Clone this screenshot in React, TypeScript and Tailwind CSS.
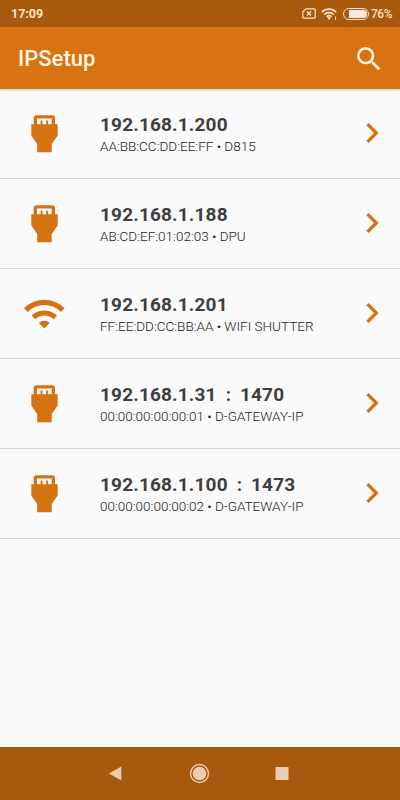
import type { ReactNode } from "react";

type Device = {
  ip: string;
  port?: string;
  mac: string;
  name: string;
  wifi?: boolean;
};

const devices: Device[] = [
  { ip: "192.168.1.200", mac: "AA:BB:CC:DD:EE:FF", name: "D815" },
  { ip: "192.168.1.188", mac: "AB:CD:EF:01:02:03", name: "DPU" },
  {
    ip: "192.168.1.201",
    mac: "FF:EE:DD:CC:BB:AA",
    name: "WIFI SHUTTER",
    wifi: true,
  },
  {
    ip: "192.168.1.31",
    port: "1470",
    mac: "00:00:00:00:00:01",
    name: "D-GATEWAY-IP",
  },
  {
    ip: "192.168.1.100",
    port: "1473",
    mac: "00:00:00:00:00:02",
    name: "D-GATEWAY-IP",
  },
];

export default function App() {
  return (
    <div className="flex h-screen w-full flex-col overflow-hidden bg-[#fafafa] font-[Roboto,sans-serif]">
      <StatusBar />

      <header className="z-10 flex h-[62px] shrink-0 items-center justify-between bg-[#d97211] pt-[2px] pr-[15px] pl-[18px] shadow-[0_1px_3px_rgba(0,0,0,0.2)]">
        <h1 className="text-[22px] leading-7 font-medium text-[#fff6e4]">
          IPSetup
        </h1>
        <SearchIcon />
      </header>

      <main className="flex-1">
        {devices.map((device) => (
          <DeviceRow key={device.ip} device={device} />
        ))}
      </main>

      <NavBar />
    </div>
  );
}

function StatusBar() {
  return (
    <div className="flex h-[27px] shrink-0 items-center justify-between bg-[#a9590e] pr-2 pl-[11px] text-[#fbe3c6]">
      <span className="pt-px text-[12.5px] leading-4 font-bold">17:09</span>
      <div className="flex items-center">
        <svg className="h-[11px] w-[14px]" viewBox="0 0 14 11" fill="none">
          <path
            d="M4 .8h8.2a1 1 0 0 1 1 1v7.4a1 1 0 0 1-1 1H1.8a1 1 0 0 1-1-1V4z"
            stroke="currentColor"
            strokeWidth="1.2"
          />
          <path
            d="m5 3.500 4 4m0-4-4 4"
            stroke="currentColor"
            strokeWidth="1.4"
          />
        </svg>
        <svg className="ml-[5px] h-3 w-4" viewBox="0 0 16 12" fill="none">
          <path
            d="M.8 4.100a10.300 10.300 0 0 1 14.400 0M3.200 6.500a6.900 6.900 0 0 1 9.600 0M5.500 8.800a3.600 3.600 0 0 1 5 0"
            stroke="currentColor"
            strokeWidth="1.700"
          />
          <path
            d="m6.200 9.900 1.800 2 1.800-2a2.600 2.600 0 0 0-3.600 0M14 8.500h1V12h-1z"
            fill="currentColor"
          />
        </svg>
        <div className="ml-1.5 flex h-3 w-[26px] items-center justify-end rounded-full border border-current pr-px">
          <div className="h-2 w-[18px] rounded-r-full bg-[#f8e9df]" />
        </div>
        <span className="ml-[2px] text-[12px] leading-4 font-medium tracking-[-0.5px]">
          76%
        </span>
      </div>
    </div>
  );
}

function DeviceRow({ device }: { device: Device }) {
  return (
    <div className="flex h-[90px] items-center border-b border-[#d9d9d9] pr-2 pb-px">
      <div className="flex w-[100px] justify-start pt-[2px] pl-[23px] text-[#d57212]">
        {device.wifi ? <WifiIcon /> : <EthernetIcon />}
      </div>
      <div className="flex-1 pt-1 whitespace-pre">
        <div className="text-[19px] leading-[22px] font-bold tracking-[0.17px] text-[#3f3f3f]">
          {device.ip}
          {device.port && (
            <>
              <span className="tracking-[-0.2px]">{"  :  "}</span>
              {device.port}
            </>
          )}
        </div>
        <div className="text-[13.5px] leading-5 font-light text-[#222222]">
          {device.mac} • {device.name}
        </div>
      </div>
      <svg
        className="size-10 text-[#d57212]"
        viewBox="0 0 24 24"
        fill="currentColor"
      >
        <path d="M10 6 8.590 7.410 13.170 12l-4.580 4.590L10 18l6-6z" />
      </svg>
    </div>
  );
}

function EthernetIcon() {
  return (
    <svg className="h-[38px] w-[42px]" viewBox="0 0 42 38" fill="currentColor">
      <path
        fillRule="evenodd"
        d="M13.500 .3h15.700A2.800 2.800 0 0 1 32 3.100V9.300h2.700V20.500l-6 8.500V37.300H14.200V29L8.300 20.500V9.300h2.400V3.100A2.800 2.800 0 0 1 13.500 .3M14 3.500V9.300h3.600V5.500h1.900V9.300h3.700V5.500h1.900V9.300h3.600V3.500z"
      />
    </svg>
  );
}

function WifiIcon() {
  return (
    <svg className="h-[30px] w-[42px]" viewBox="0 0 42 30" fill="currentColor">
      <path d="M1 9.200a28.900 28.900 0 0 1 40.600 0l-3.700 3.700a23.500 23.500 0 0 0-33.200 0z" />
      <path d="M8.500 16.600a18.300 18.300 0 0 1 25.600 0l-3.700 3.700a13.100 13.100 0 0 0-18.200 0z" />
      <path d="M15.900 24a7.700 7.700 0 0 1 10.800 0l-5.400 5.400z" />
    </svg>
  );
}

function SearchIcon() {
  return (
    <svg
      className="mb-px size-[32px] text-[#fff3dc]"
      viewBox="0 0 24 24"
      fill="currentColor"
    >
      <path d="M15.500 14h-.79l-.28-.27A6.471 6.471 0 0 0 16 9.500 6.500 6.500 0 1 0 9.500 16c1.610 0 3.090-.59 4.230-1.570l.27.28v.79l5 4.990L20.490 19zm-6 0C7.010 14 5 11.990 5 9.500S7.010 5 9.500 5 14 7.010 14 9.500 11.990 14 9.500 14" />
    </svg>
  );
}

function NavBar() {
  return (
    <nav className="flex h-[53px] shrink-0 items-center justify-center gap-[61px] bg-[#a9590e] pr-px text-[#e9cdb3]">
      <NavButton>
        <path d="M14.300 3.500v14L2 10.500z" />
      </NavButton>
      <NavButton>
        <circle cx="10.500" cy="10.500" r="6.800" />
        <circle
          cx="10.500"
          cy="10.500"
          r="9"
          fill="none"
          stroke="currentColor"
          strokeWidth="1.400"
        />
      </NavButton>
      <NavButton>
        <rect x="4.500" y="4" width="13" height="13" rx=".5" />
      </NavButton>
    </nav>
  );
}

function NavButton({ children }: { children: ReactNode }) {
  return (
    <svg className="size-[21px]" viewBox="0 0 21 21" fill="currentColor">
      {children}
    </svg>
  );
}
